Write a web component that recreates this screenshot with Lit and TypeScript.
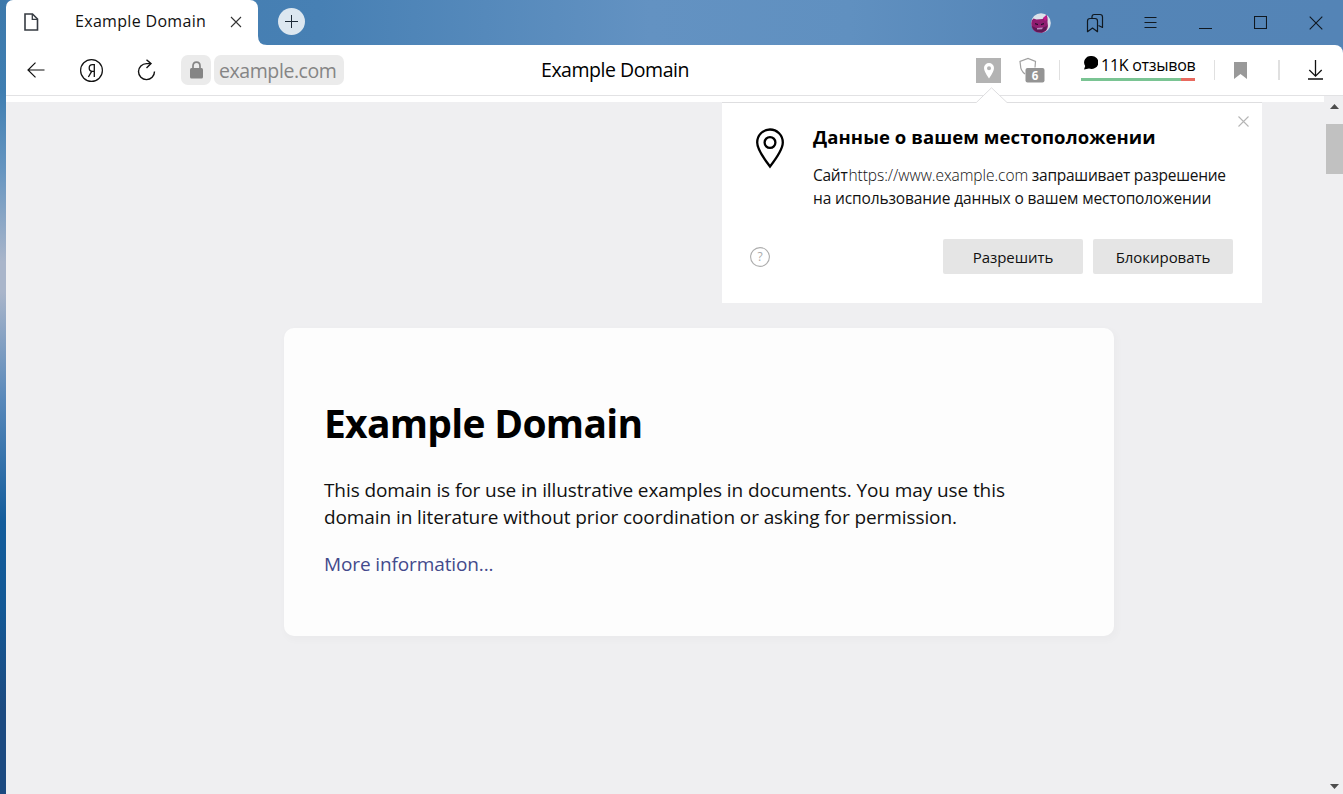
import { LitElement, html, css } from "lit";
import { customElement } from "lit/decorators.js";

@customElement("title-bar")
class TitleBar extends LitElement {
  static styles = css`
    :host { display: flex; height: 45px; align-items: stretch; }
    .tab { width: 252px; background: #fff; border-radius: 7px 8px 0 0; display: flex; align-items: center; box-sizing: border-box; padding: 0 16px 2px 18px; font-size: 16px; }
    .tab .name { margin: -2px 0 0 36px; flex: 1; white-space: nowrap; letter-spacing: 0.32px; color: #111; }
    .foot { width: 9px; align-self: flex-end; display: block; margin-right: 11px; }
    .plus { align-self: center; margin-top: -2px; }
    .right { margin-left: auto; display: flex; align-items: center; padding-right: 20px; }
    svg { display: block; flex: none; }
    .g1 { margin-right: 35px; } .g2 { margin-right: 40px; } .g3 { margin-right: 42px; margin-top: -1px; } .g4 { margin-right: 42px; } .g5 { margin-right: 42px; }
  `;
  render() {
    return html`
      <div class="tab">
        <svg width="15" height="18" viewBox="0 0 15 18" fill="none" stroke="#363b42" stroke-width="1.6"><path d="M1 1h7.5l5 5v11H1z"/><path d="M8.3 1v5.4h5.4" stroke-width="1.3"/></svg>
        <span class="name">Example Domain</span>
        <svg width="12" height="12" viewBox="0 0 12 12" stroke="#333" stroke-width="1.1"><path d="M1 1l10 10M11 1L1 11"/></svg>
      </div>
      <svg class="foot" width="9" height="9" viewBox="0 0 9 9" fill="#fff"><path d="M0 0Q0 9 9 9H0z"/></svg>
      <svg class="plus" width="27" height="27" viewBox="0 0 27 27"><circle cx="13.5" cy="13.5" r="13.5" fill="#dce7f0"/><path d="M7 13.5h13M13.5 7v13" stroke="#1d2b38" stroke-width="1"/></svg>
      <div class="right">
        <svg class="g1" width="20" height="20" viewBox="0 0 20 20"><circle cx="10" cy="10" r="9.800" fill="#dce1ea"/><path d="M.300 10Q.500 6.500 2.500 5.500L5.500 6.500l6-.5 4-4q1.500 2 1 7l.5 4q-.5 5-5 6.500-7 1-10-3Q.200 14 .300 10z" fill="#8f1d70"/><path d="M12 5l3.500-3 .5 4-2 2z" fill="#c0188a"/><path d="M1 13l4 2 6 0 5-2-1 4-4 2.500-5-.5-4-3z" fill="#5e1854"/><path d="M4 10l3 1v1.300l-3-1zM13 10l-3 1v1.300l3-1z" fill="#25102e"/><path d="M6 15l6-.5-1 1.800-5 .2z" fill="#b98ac0"/></svg>
        <svg class="g2" width="18" height="20" viewBox="0 0 18 20" fill="none" stroke="#101820" stroke-width="1.200" stroke-linejoin="round"><path d="M1.500 8q0-2.500 2.500-2.500h5q2.500 0 2.500 2.500v10.700l-5-3.700-5 3.700z"/><path d="M6 5.300V3.700Q6 1.500 8.200 1.500h5.800q2.500 0 2.500 2.500v10.500l-4-2"/></svg>
        <svg class="g3" width="13" height="12" viewBox="0 0 13 12" stroke="#101820" stroke-width="1"><path d="M.5 1.500h12M.5 6.500h12M.5 11.500h12"/></svg>
        <svg class="g4" width="13" height="12" viewBox="0 0 13 12" stroke="#101820"><path d="M0 11.500h13"/></svg>
        <svg class="g5" width="13" height="13" viewBox="0 0 13 13" fill="none" stroke="#101820" stroke-width="1.100"><path d="M.5.500h12v12H.5z"/></svg>
        <svg width="14" height="14" viewBox="0 0 14 14" stroke="#101820" stroke-width="1.100"><path d="M.7.700l12.600 12.600M13.300.700L.7 13.300"/></svg>
      </div>`;
  }
}

@customElement("tool-bar")
class ToolBar extends LitElement {
  static styles = css`
    :host { display: grid; grid-template-columns: 535px 1fr auto; height: 50px; background: #fff; border-bottom: 1px solid #e2e2e4; border-top-right-radius: 8px; align-items: center; }
    svg { display: block; flex: none; }
    .left { display: flex; align-items: center; padding-left: 20.5px; }
    .yandex { margin: 0 34px 0 35.5px; }
    .pill { background: #ebebeb; border-radius: 7px; height: 30px; display: flex; align-items: center; }
    .lock { width: 30px; margin: 0 3px 0 25px; justify-content: center; }
    .addr { width: 130px; color: #858585; font-size: 19.5px; box-sizing: border-box; padding: 1px 0 0 5px; }
    .addr span { letter-spacing: -0.42px; }
    .title { font-size: 19.5px; white-space: nowrap; letter-spacing: -0.46px; padding-bottom: 2px; }
    .right { display: flex; align-items: center; padding-right: 20px; }
    .pin { margin-right: 18px; }
    .sep { width: 1px; height: 20px; background: #e0e0e0; }
    .s1 { margin: 0 21px 0 14px; } .s2 { margin: 0 19px; } .s3 { margin: 0 28px 0 31px; width: 2px; }
    .reviews { width: 114px; height: 26px; display: flex; flex-direction: column; justify-content: space-between; margin-top: -5px; }
    .row { display: flex; height: 20px; align-items: center; gap: 3px; padding-left: 3px; font-size: 16px; white-space: nowrap; line-height: 20px; letter-spacing: -0.27px; }
    .row svg { margin-top: -3px; }
    .bar { display: flex; height: 3px; }
    .good { flex: 1; background: #7ac493; } .bad { width: 14px; background: #e8695e; }
    text { font-family: "Open Sans", sans-serif; }
  `;
  render() {
    return html`
      <div class="left">
        <svg width="18" height="16" viewBox="0 0 18 16" fill="none" stroke="#111" stroke-width="1.200"><path d="M17.500 8H1M8.500.600L1 8l7.500 7.400"/></svg>
        <svg class="yandex" width="23" height="23" viewBox="0 0 23 23" fill="none" stroke="#111"><circle cx="11.500" cy="11.500" r="10.900" stroke-width="1.200"/><path d="M14.300 18V5.700h-1.800q-3.300 0-3.300 3.300t3.300 3.300h1.800M11.700 12.300L8.400 18" stroke-width="1.300"/></svg>
        <svg width="19" height="22" viewBox="0 0 19 22" fill="none" stroke="#111" stroke-width="1.400"><path d="M13.500 4.600H9.500a8 8 0 1 0 8 8"/><path d="M9.500.800l4.500 3.800-4.500 4.500"/></svg>
        <div class="pill lock"><svg width="13" height="18" viewBox="0 0 13 18"><path d="M3 8V5q0-3.800 3.500-3.800T10 5v3" fill="none" stroke="#858585" stroke-width="1.700"/><rect y="7" width="13" height="10.500" rx="1.500" fill="#858585"/></svg></div>
        <div class="pill addr"><span>example.com</span></div>
      </div>
      <div class="title">Example Domain</div>
      <div class="right">
        <svg class="pin" width="25" height="25" viewBox="0 0 25 25"><path d="M0 0h25v25H0z" fill="#b3b3b3"/><path fill-rule="evenodd" fill="#fff" d="M13 5a5 5 0 0 1 5 5q0 3.500-5 10.500Q8 13.500 8 10a5 5 0 0 1 5-5zm0 3.200a2 2 0 1 0 0 4 2 2 0 0 0 0-4z"/></svg>
        <svg width="26" height="26" viewBox="0 0 26 26"><path d="M6 17Q1.500 13.500 1.500 8.500L1 4.500 9 1.500l7.500 3-.5 6" fill="none" stroke="#a0a0a0" stroke-width="1.200"/><rect x="6.500" y="11" width="19" height="14.500" rx="2" fill="#949494"/><text x="16" y="22.500" text-anchor="middle" font-size="11.500" font-weight="700" fill="#fff">6</text></svg>
        <div class="sep s1"></div>
        <div class="reviews">
          <div class="row"><svg width="14" height="14" viewBox="0 0 14 14"><path d="M7 0a7 6.500 0 1 1-2 12.600L0 13.500l1.200-3.500A6.700 6.500 0 0 1 7 0z"/></svg><span>11K отзывов</span></div>
          <div class="bar"><div class="good"></div><div class="bad"></div></div>
        </div>
        <div class="sep s2"></div>
        <svg width="13" height="17" viewBox="0 0 13 17"><path d="M0 0h13v17l-6.500-5L0 17z" fill="#999"/></svg>
        <div class="sep s3"></div>
        <svg width="15" height="20" viewBox="0 0 15 20" fill="none" stroke="#111" stroke-width="1.300"><path d="M7.500 0v16M1.300 10l6.200 6.200L13.700 10M0 19h15"/></svg>
      </div>`;
  }
}

@customElement("geo-prompt")
class GeoPrompt extends LitElement {
  static styles = css`
    :host { display: block; }
    .arrow { display: block; margin: 0 0 -1px 253px; }
    .box { height: 201px; box-sizing: border-box; background: #fff; border-top: 1px solid #dedee0; display: grid; grid-template-columns: 63px minmax(0, 1fr) 29px; grid-template-rows: 136px 35px; padding: 0 0 0 28px; }
    .marker { padding: 25px 0 0 6px; }
    .copy { padding-top: 22px; white-space: nowrap; }
    h2 { margin: 0 0 15px; font-size: 18.5px; line-height: 24px; font-weight: 700; letter-spacing: 0.08px; }
    p { margin: 0; font-size: 15.5px; line-height: 22.6px; color: #111; }
    .close { padding-top: 13px; justify-self: start; margin-left: 5px; }
    .help { align-self: center; }
    .btns { grid-column: 2 / 3; display: flex; gap: 10px; justify-content: flex-end; }
    button { width: 140px; height: 35px; border: 0; padding: 1px 0 0; border-radius: 2px; background: #e5e5e5; font: 15px "Open Sans", sans-serif; color: #111; letter-spacing: -0.05px; }
    svg { display: block; }
    text { font-family: "Open Sans", sans-serif; }
    .l1 { letter-spacing: -0.26px; } .l2 { letter-spacing: -0.13px; } .url { color: #111; letter-spacing: -0.05px; font-weight: 300; margin-left: 1px; }
  `;
  render() {
    return html`
      <svg class="arrow" width="34" height="16" viewBox="0 0 34 16"><path d="M0 16L16.500 1 33 16z" fill="#fff"/><path d="M0 15.500h1.300L16.500.800 32 15.500h2" fill="none" stroke="#dedee0"/></svg>
      <div class="box">
        <div class="marker"><svg width="28" height="41" viewBox="0 0 28 41" fill="none" stroke="#000" stroke-width="2.300"><path d="M14 38.500Q1.200 22 1.200 14.500a12.800 13 0 0 1 25.600 0Q26.800 22 14 38.500z"/><circle cx="14" cy="14.500" r="5.400"/></svg></div>
        <div class="copy"><h2>Данные о вашем местоположении</h2>
          <p><span class="l1">Сайт<span class="url">https://www.example.com</span> запрашивает разрешение</span><br /><span class="l2">на использование данных о вашем местоположении</span></p></div>
        <div class="close"><svg width="11" height="11" viewBox="0 0 11 11" stroke="#b5b5b5" stroke-width="1.100"><path d="M.5.500l10 10M10.500.500l-10 10"/></svg></div>
        <svg class="help" width="20" height="20" viewBox="0 0 20 20"><circle cx="10" cy="10" r="9.400" fill="none" stroke="#adadad" stroke-width="1.100"/><text x="10" y="14.300" text-anchor="middle" font-size="12" fill="#aaa">?</text></svg>
        <div class="btns"><button>Разрешить</button><button>Блокировать</button></div>
      </div>`;
  }
}

@customElement("app-root")
class AppRoot extends LitElement {
  static styles = css`
    :host { display: block; width: 1343px; height: 794px; overflow: hidden; position: relative; box-sizing: border-box; padding-left: 6px; font-family: "Open Sans", sans-serif; color: #000;
      background: linear-gradient(180deg, #3d79ab 0, #3f7eb1 90px, #6695c0 170px, #a9b5ca 262px, #a9b5ca 292px, #5888ba 400px, #135c9b 522px, #135895 610px, #1c4a80 710px, #1c4a80 794px) 0 0 / 6px 100% no-repeat,
        linear-gradient(90deg, #427bad 0, #4780b4 320px, #6392c2 650px, #6090c0 850px, #5485b7 1050px, #5484b6 1343px); }
    .page { display: flex; height: 698px; background: #efeff1; }
    .view { flex: 1; display: flex; flex-direction: column; align-items: flex-start; }
    .strip { height: 6px; background: #fff; align-self: stretch; }
    .card { margin: 226px 0 0 278px; width: 830px; height: 308px; box-sizing: border-box; padding: 67px 40px 0; background: #fdfdfd; border-radius: 10px; box-shadow: 2px 3px 7px 2px rgba(0,0,0,.02); white-space: nowrap; }
    h1 { margin: 0; font-size: 39px; line-height: 56px; font-weight: 700; letter-spacing: -0.72px; }
    p { margin: 26px 0 20px; font-size: 19px; line-height: 27px; letter-spacing: -0.09px; color: #111; }
    a { font-size: 19px; line-height: 27px; color: #434a8c; letter-spacing: -0.12px; }
    .scroll { width: 19px; display: flex; flex-direction: column; align-items: flex-end; }
    .up { margin: 8px 4px 15px 0; } .down { margin: auto 4px 5px 0; }
    .thumb { width: 17px; height: 50px; background: #c1c1c1; }
    svg { display: block; }
    geo-prompt { position: absolute; left: 722px; top: 87px; width: 540px; }
  `;
  render() {
    return html`
      <title-bar></title-bar>
      <tool-bar></tool-bar>
      <div class="page">
        <div class="view">
          <div class="strip"></div>
          <div class="card">
            <h1>Example Domain</h1>
            <p>This domain is for use in illustrative examples in documents. You may use this<br />domain in literature without prior coordination or asking for permission.</p>
            <a>More information...</a>
          </div>
        </div>
        <div class="scroll">
          <svg class="up" width="9" height="5" viewBox="0 0 9 5"><path d="M0 5L4.500 0 9 5z" fill="#4d4d4d"/></svg>
          <div class="thumb"></div>
          <svg class="down" width="9" height="5" viewBox="0 0 9 5"><path d="M0 0h9L4.500 5z" fill="#4d4d4d"/></svg>
        </div>
      </div>
      <geo-prompt></geo-prompt>`;
  }
}
